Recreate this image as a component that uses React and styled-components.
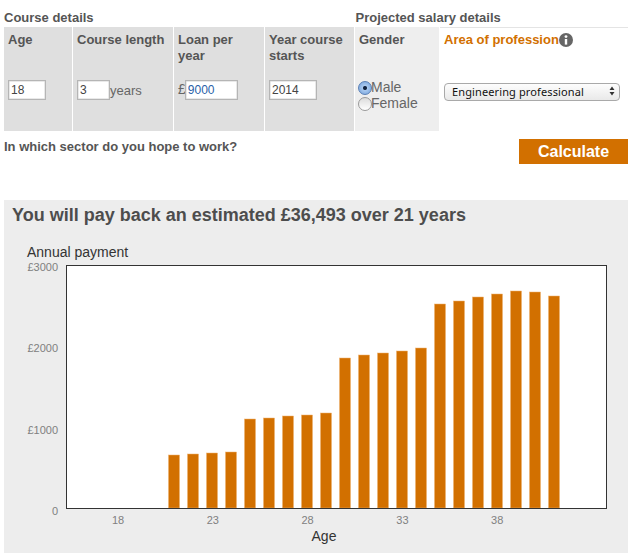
import { createGlobalStyle } from 'styled-components'
import styled from 'styled-components'

const GlobalStyle = createGlobalStyle`
    html, body {
        margin: 0;
        padding: 0;
        background: #fff;
    }

    body {
        font-family: "Liberation Sans", Arial, sans-serif;
        color: #555;
    }
`

const Page = styled.div`
    width: 636px;
    height: 553px;
    overflow: hidden;
    padding: 10px 8px 0 4px;
    box-sizing: border-box;
    display: flex;
    flex-direction: column;
`

const GroupTitles = styled.div`
    display: grid;
    grid-template-columns: 351.5px 1fr;
    height: 17px;
`

const GroupTitle = styled.div`
    font-size: 13px;
    font-weight: bold;
    line-height: 15px;
    color: #555;
`

const Fields = styled.div`
    display: grid;
    grid-template-columns: 68px 100px 90px 89px 84px 1fr;
    column-gap: 1px;
    height: 104px;
`

const Cell = styled.div`
    background: ${(p) => p.$bg || '#dfdfdf'};
    padding: 5px 4px 0;
    box-sizing: border-box;
    display: flex;
    flex-direction: column;
`

const Label = styled.div`
    font-size: 13px;
    font-weight: bold;
    line-height: 16px;
    height: 48px;
    color: ${(p) => p.$color || '#555'};
    display: flex;
    align-items: flex-start;
`

const InputRow = styled.div`
    display: flex;
    align-items: center;
    font-size: 13px;
    color: #666;
    height: 20px;
`

const Pound = styled.span`
    font-size: 14px;
    padding-bottom: 3px;
    margin-right: -1px;
`

const TextInput = styled.input`
    width: ${(p) => p.$w}px;
    height: 20px;
    box-sizing: border-box;
    border: 1px solid #b5b5b5;
    box-shadow: inset 0 0 0 0.5px #d4d4d4;
    padding: 0 0 0 2px;
    margin: 0;
    font-family: "Liberation Sans", Arial, sans-serif;
    font-size: 12px;
    color: ${(p) => p.$color || '#444'};
    background: #fff;
    outline: none;
`

const RadioGroup = styled.div`
    display: flex;
    flex-direction: column;
`

const RadioLabel = styled.label`
    display: flex;
    align-items: center;
    height: 16px;
    font-size: 14px;
    color: #666;
`

const RadioText = styled.span`
    line-height: 14px;
    margin-top: -2px;
`

const Radio = styled.input.attrs({ type: 'radio' })`
    appearance: none;
    width: 14px;
    height: 14px;
    margin: 0 -1px 0 -1px;
    border-radius: 50%;
    border: 1px solid ${(p) => (p.checked ? '#5a7fb5' : '#9a9a9a')};
    box-sizing: border-box;
    background: ${(p) =>
        p.checked
            ? 'radial-gradient(circle, #12233f 0 1.5px, #a9c8ee 2.5px, #6f9fdb 100%)'
            : 'linear-gradient(#dcdcdc, #fff)'};
`

const ProfessionCell = styled.div`
    padding: 4px 8px 0 4px;
    border-top: 1px solid #e4e4e4;
    display: flex;
    flex-direction: column;
`

const SelectWrap = styled.div`
    position: relative;
    width: 176px;
    height: 18px;
    margin-top: 2px;
`

const Select = styled.select`
    appearance: none;
    width: 100%;
    height: 100%;
    box-sizing: border-box;
    border: 1px solid #a9a9a9;
    border-radius: 4px;
    background: linear-gradient(#fdfdfd, #f1f1f1 60%, #e9e9e9);
    font-family: "Noto Sans", Arial, sans-serif;
    font-size: 11px;
    letter-spacing: 0.12px;
    color: #111;
    padding: 0 0 0 7px;
    margin: 0;
    outline: none;
`

const SelectArrows = styled.svg`
    position: absolute;
    right: 5px;
    top: 4px;
    pointer-events: none;
`

const InfoGlyph = styled.svg`
    margin-top: 1px;
    flex: none;
`

const ActionRow = styled.div`
    display: flex;
    justify-content: space-between;
    align-items: flex-start;
    margin-top: 8px;
    height: 61px;
`

const Question = styled.div`
    font-size: 13px;
    font-weight: bold;
    line-height: 15px;
    color: #555;
`

const CalcButton = styled.button`
    width: 109px;
    height: 25px;
    border: none;
    padding: 0;
    margin: 0;
    background: #d27000;
    color: #fff;
    font-family: "Liberation Sans", Arial, sans-serif;
    font-size: 16px;
    font-weight: bold;
`

const Results = styled.section`
    background: #ededed;
    flex: 1;
    display: flex;
    flex-direction: column;
    padding: 5px 0 0 8px;
`

const ResultTitle = styled.h2`
    margin: 0 0 1px;
    font-size: 18px;
    font-weight: bold;
    line-height: 20px;
    color: #4d4d4d;
`

const Chart = styled.svg`
    display: block;
    margin: 0 0 0 -8px;
`

const ChartText = styled.text`
    font-family: "Liberation Sans", Arial, sans-serif;
    font-size: ${(p) => p.$size || 11}px;
    fill: ${(p) => p.$fill || '#808080'};
`

// bar tops in page pixels, ages 21 to 41
const barTops = [455, 454, 453, 452, 419, 418, 416, 415, 413, 358, 355, 353, 351, 348, 304, 301, 297, 294, 291, 292, 296]
const yTicks = [
    ['£3000', 271],
    ['£2000', 352],
    ['£1000', 434],
    ['0', 515],
]
const xTicks = [18, 23, 28, 33, 38]

// chart svg sits at x 4, y 226 in the page
const ox = 4
const oy = 226

const PaymentChart = () => (
    <Chart width="624" height="327" viewBox="0 0 624 327">
        <ChartText x={27 - ox} y={257 - oy} $size={14} $fill="#333">
            Annual payment
        </ChartText>
        <rect x={66.5 - ox} y={265.5 - oy} width="540" height="243" fill="#fff" stroke="#333" />
        {barTops.map((top, i) => (
            <rect
                key={i}
                x={168.5 + i * 19 - ox}
                y={top - oy}
                width="11"
                height={508 - top}
                fill="#d27000"
                stroke="#eeb16e"
                strokeWidth="0.5"
            />
        ))}
        <line x1={66 - ox} x2={607 - ox} y1={508.5 - oy} y2={508.5 - oy} stroke="#333" />
        {yTicks.map(([label, y]) => (
            <ChartText key={label} x={58 - ox} y={y - oy} textAnchor="end">
                {label}
            </ChartText>
        ))}
        {xTicks.map((age, i) => (
            <ChartText key={age} x={118 + i * 94.8 - ox} y={524 - oy} textAnchor="middle">
                {age}
            </ChartText>
        ))}
        <ChartText x={324 - ox} y={541 - oy} $size={14} $fill="#333" textAnchor="middle">
            Age
        </ChartText>
    </Chart>
)

const InfoIcon = () => (
    <InfoGlyph width="14" height="14" viewBox="0 0 14 14">
        <circle cx="7" cy="7" r="7" fill="#666" />
        <circle cx="7" cy="3.6" r="1.4" fill="#fff" />
        <rect x="5.8" y="6" width="2.4" height="5.6" fill="#fff" />
    </InfoGlyph>
)

const App = () => (
    <Page>
        <GlobalStyle />
        <GroupTitles>
            <GroupTitle>Course details</GroupTitle>
            <GroupTitle>Projected salary details</GroupTitle>
        </GroupTitles>
        <Fields>
            <Cell>
                <Label>Age</Label>
                <InputRow>
                    <TextInput $w={38} defaultValue="18" />
                </InputRow>
            </Cell>
            <Cell>
                <Label>Course length</Label>
                <InputRow>
                    <TextInput $w={33} defaultValue="3" />
                    years
                </InputRow>
            </Cell>
            <Cell>
                <Label>Loan per year</Label>
                <InputRow>
                    <Pound>£</Pound>
                    <TextInput $w={53} $color="#2a5fa8" defaultValue="9000" />
                </InputRow>
            </Cell>
            <Cell>
                <Label>Year course starts</Label>
                <InputRow>
                    <TextInput $w={48} defaultValue="2014" />
                </InputRow>
            </Cell>
            <Cell $bg="#eeeeee">
                <Label>Gender</Label>
                <RadioGroup>
                    <RadioLabel>
                        <Radio name="gender" checked readOnly />
                        <RadioText>Male</RadioText>
                    </RadioLabel>
                    <RadioLabel>
                        <Radio name="gender" readOnly />
                        <RadioText>Female</RadioText>
                    </RadioLabel>
                </RadioGroup>
            </Cell>
            <ProfessionCell>
                <Label $color="#d27000">
                    Area of profession
                    <InfoIcon />
                </Label>
                <SelectWrap>
                    <Select defaultValue="eng">
                        <option value="eng">Engineering professional</option>
                    </Select>
                    <SelectArrows width="6" height="10" viewBox="0 0 6 10">
                        <path d="M3 0.5 L5.5 4 H0.5 Z M3 9.5 L5.5 6 H0.5 Z" fill="#333" />
                    </SelectArrows>
                </SelectWrap>
            </ProfessionCell>
        </Fields>
        <ActionRow>
            <Question>In which sector do you hope to work?</Question>
            <CalcButton>Calculate</CalcButton>
        </ActionRow>
        <Results>
            <ResultTitle>You will pay back an estimated £36,493 over 21 years</ResultTitle>
            <PaymentChart />
        </Results>
    </Page>
)

export default App
